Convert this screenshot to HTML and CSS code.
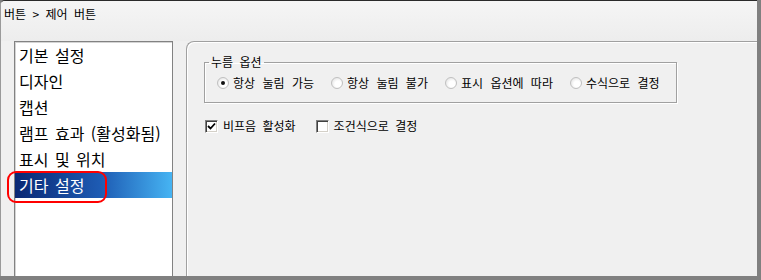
FILE: index.html
```html
<!DOCTYPE html>
<html lang="ko">
<head>
  <meta charset="UTF-8">
  <title>제어 버튼</title>
  <link rel="stylesheet" href="styles.css">
</head>
<body>

  <div class="window">
    <div class="crumb">버튼 &gt; 제어 버튼</div>

    <div class="main">
      <div class="list-wrap">
        <ul class="list">
          <li>기본 설정</li>
          <li>디자인</li>
          <li>캡션</li>
          <li>램프 효과 (활성화됨)</li>
          <li>표시 및 위치</li>
          <li class="selected">기타 설정</li>
        </ul>
        <!-- 표시용 빨간 테두리 -->
        <div class="mark"></div>
      </div>

      <div class="panel">
        <fieldset class="group">
          <legend>누름 옵션</legend>
          <div class="radios">
            <label class="radio"><span class="circle on"></span>항상 눌림 가능</label>
            <label class="radio"><span class="circle"></span>항상 눌림 불가</label>
            <label class="radio"><span class="circle"></span>표시 옵션에 따라</label>
            <label class="radio"><span class="circle"></span>수식으로 결정</label>
          </div>
        </fieldset>

        <div class="checks">
          <label class="check">
            <span class="box">
              <svg width="9" height="9" viewBox="0 0 9 9"><path d="M1 4 L3.5 6.5 L8 1.5" fill="none" stroke="#000" stroke-width="1.8"/></svg>
            </span>비프음 활성화
          </label>
          <label class="check"><span class="box"></span>조건식으로 결정</label>
        </div>
      </div>
    </div>
  </div>

</body>
</html>
```

FILE: styles.css
```css
html, body {
  margin: 0;
  padding: 0;
}

body {
  width: 761px;
  height: 280px;
  font-family: "Noto Sans CJK KR", sans-serif;
  font-size: 12px;
  color: #000;
  background-color: #808080;
}

.window {
  box-sizing: border-box;
  width: 757px;
  height: 276px;
  border-top: 1px solid #2a2a2a;
  border-left: 1px solid #9a9a9a;
  border-top-left-radius: 5px;
  background-color: #f0f0f0;
  display: flex;
  flex-direction: column;
  overflow: hidden;
}

.crumb {
  height: 40px;
  flex-shrink: 0;
  padding: 5px 0 0 3px;
  box-sizing: border-box;
  line-height: 16px;
  word-spacing: 3px;
  background: linear-gradient(#f5f5f5, #ededed);
}

.main {
  flex: 1;
  display: flex;
  min-height: 0;
}

.list-wrap {
  position: relative;
  width: 159px;
  margin-left: 13px;
  flex-shrink: 0;
}

.list {
  box-sizing: border-box;
  height: 100%;
  margin: 0;
  padding: 0;
  list-style: none;
  background-color: #fff;
  border: 1px solid #828282;
  border-bottom: none;
  box-shadow: inset 1px 1px 0 #d4d4d4;
  font-size: 16px;
}

.list li {
  height: 26px;
  line-height: 26px;
  padding-left: 4px;
  word-spacing: 2px;
  white-space: nowrap;
}

.list li.selected {
  color: #fff;
  background: linear-gradient(90deg, #0a2874, #1e5cb4 55%, #46b4f3);
}

.mark {
  position: absolute;
  left: -7px;
  top: 130px;
  width: 96px;
  height: 28px;
  border: 2px solid #f00;
  border-radius: 9px;
}

.panel {
  flex: 1;
  margin-left: 13px;
  border-top: 1px solid #a0a0a0;
  border-left: 1px solid #a0a0a0;
  border-top-left-radius: 8px;
  box-shadow: inset 1px 1px 0 #fff;
}

.group {
  box-sizing: border-box;
  width: 473px;
  margin: 13px 0 0 17px;
  padding: 7px 12px 12px;
  border: 1px solid #a0a0a0;
  box-shadow: inset 1px 1px 0 #fff, 1px 1px 0 #fff;
}

.group legend {
  margin-left: -8px;
  padding: 0 2px;
  line-height: 14px;
  word-spacing: 3px;
}

.radios {
  display: flex;
  gap: 17px;
  line-height: 14px;
}

.radio {
  display: flex;
  align-items: center;
  gap: 4px;
  word-spacing: 4px;
  white-space: nowrap;
}

.circle {
  box-sizing: border-box;
  width: 12px;
  height: 12px;
  border-radius: 50%;
  border: 1px solid #c0c0c0;
  background: radial-gradient(circle at 60% 60%, #ffffff 35%, #e2e2e2 85%);
  display: flex;
  align-items: center;
  justify-content: center;
}

.circle.on::after {
  content: "";
  width: 4px;
  height: 4px;
  border-radius: 50%;
  background-color: #111;
}

.checks {
  display: flex;
  gap: 20px;
  margin: 16px 0 0 18px;
  line-height: 14px;
}

.check {
  display: flex;
  align-items: center;
  gap: 5px;
  word-spacing: 3px;
  white-space: nowrap;
}

.box {
  box-sizing: border-box;
  width: 13px;
  height: 13px;
  background-color: #fff;
  border: 1px solid;
  border-color: #808080 #fff #fff #808080;
  box-shadow: inset 1px 1px 0 #404040, inset -1px -1px 0 #d4d0c8;
  display: flex;
  align-items: center;
  justify-content: center;
}
```
